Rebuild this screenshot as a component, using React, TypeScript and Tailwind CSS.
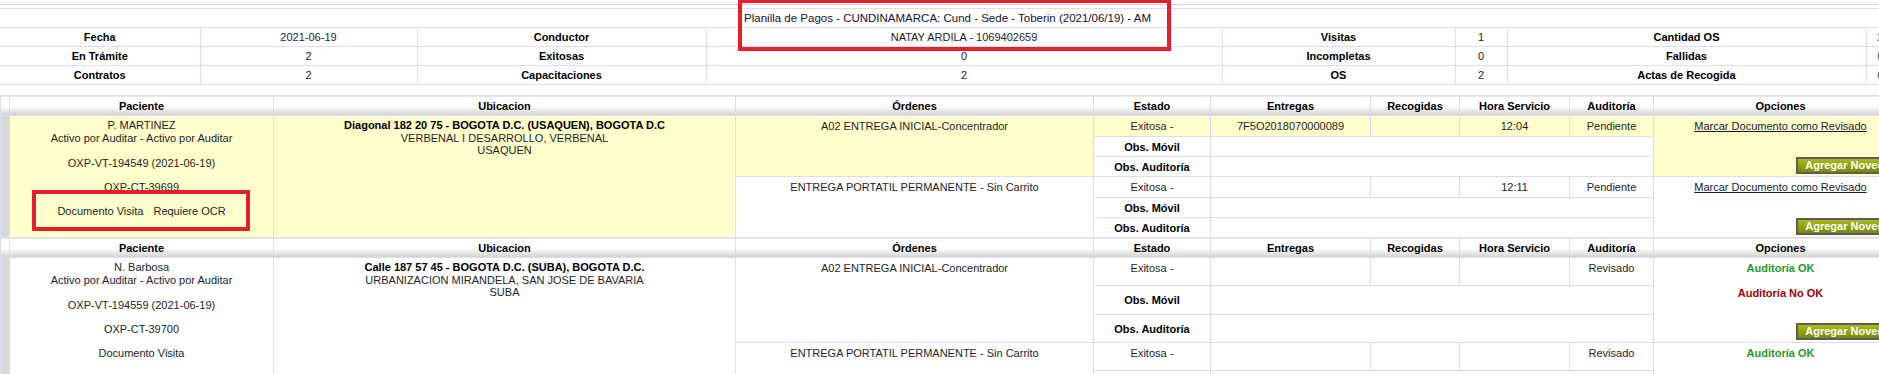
import React from 'react';

const cell = 'border border-[#dcdcf2] px-[3px] py-0 text-center';
const head =
  'border border-[#dcdcf2] p-0 text-center align-middle font-bold text-black bg-[linear-gradient(to_bottom,#ffffff_50%,#d0d0d0_100%)]';

const summaryRows = [
  ['Fecha', '2021-06-19', 'Conductor', 'NATAY ARDILA - 1069402659', 'Visitas', '1', 'Cantidad OS', '2'],
  ['En Trámite', '2', 'Exitosas', '0', 'Incompletas', '0', 'Fallidas', '0'],
  ['Contratos', '2', 'Capacitaciones', '2', 'OS', '2', 'Actas de Recogida', '0'],
];

const SummaryTable = () => (
  <table className="w-[1895px] table-fixed border-collapse">
    <colgroup>
      <col className="w-[200px]" />
      <col className="w-[217px]" />
      <col className="w-[289px]" />
      <col className="w-[516px]" />
      <col className="w-[233px]" />
      <col className="w-[52px]" />
      <col className="w-[359px]" />
      <col className="w-[29px]" />
    </colgroup>
    <tbody>
      <tr className="h-[19px]">
        <td colSpan={8} className="border-y border-[#dcdcf2] p-0 text-center text-[11.5px] text-[#14142a]">
          Planilla de Pagos - CUNDINAMARCA: Cund - Sede - Toberin (2021/06/19) - AM
        </td>
      </tr>
      {summaryRows.map((row, ri) => (
        <tr key={ri} className="h-[19px]">
          {row.map((c, ci) => (
            <td
              key={ci}
              className={`border border-[#dcdcf2] p-0 text-center first:border-l-0 ${
                ci % 2 === 0 ? 'font-bold text-black' : ''
              }`}
            >
              {c}
            </td>
          ))}
        </tr>
      ))}
    </tbody>
  </table>
);

const headers = ['', 'Paciente', 'Ubicacion', 'Órdenes', 'Estado', 'Entregas', 'Recogidas', 'Hora Servicio', 'Auditoría', 'Opciones'];

const HeaderRow = () => (
  <tr className="h-[20px]">
    {headers.map((h, i) => (
      <th key={i} className={head}>
        {h}
      </th>
    ))}
  </tr>
);

const NovedadButton = () => (
  <button className="h-[17px] border-2 border-[#5c5c5c] bg-[linear-gradient(to_bottom,#a8ba1c,#788a04)] px-[7px] text-[11px] font-bold leading-[13px] text-white">
    Agregar Novedad
  </button>
);

type Order = {
  name: string;
  entregas: string;
  hora: string;
  auditoria: string;
  heights: [string, string, string];
};

type Group = {
  highlight: boolean;
  patient: string;
  visit: string;
  contract: string;
  ocr: boolean;
  address: [string, string, string];
  audited: boolean;
  orders: Order[];
};

const groups: Group[] = [
  {
    highlight: true,
    patient: 'P. MARTINEZ',
    visit: 'OXP-VT-194549 (2021-06-19)',
    contract: 'OXP-CT-39699',
    ocr: true,
    address: ['Diagonal 182 20 75 - BOGOTA D.C. (USAQUEN), BOGOTA D.C', 'VERBENAL I DESARROLLO, VERBENAL', 'USAQUEN'],
    audited: false,
    orders: [
      { name: 'A02 ENTREGA INICIAL-Concentrador', entregas: '7F5O2018070000089', hora: '12:04', auditoria: 'Pendiente', heights: ['h-[21px]', 'h-[20px]', 'h-[20px]'] },
      { name: 'ENTREGA PORTATIL PERMANENTE - Sin Carrito', entregas: '', hora: '12:11', auditoria: 'Pendiente', heights: ['h-[21px]', 'h-[20px]', 'h-[20px]'] },
    ],
  },
  {
    highlight: false,
    patient: 'N. Barbosa',
    visit: 'OXP-VT-194559 (2021-06-19)',
    contract: 'OXP-CT-39700',
    ocr: false,
    address: ['Calle 187 57 45 - BOGOTA D.C. (SUBA), BOGOTA D.C.', 'URBANIZACION MIRANDELA, SAN JOSE DE BAVARIA', 'SUBA'],
    audited: true,
    orders: [
      { name: 'A02 ENTREGA INICIAL-Concentrador', entregas: '', hora: '', auditoria: 'Revisado', heights: ['h-[28px]', 'h-[29px]', 'h-[28px]'] },
      { name: 'ENTREGA PORTATIL PERMANENTE - Sin Carrito', entregas: '', hora: '', auditoria: 'Revisado', heights: ['h-[28px]', 'h-[29px]', 'h-[28px]'] },
    ],
  },
];

const Opciones = ({ audited }: { audited: boolean }) =>
  audited ? (
    <div className="flex h-[82px] flex-col items-center pt-[3px]">
      <span className="font-bold text-[#1f9a1f]">Auditoría OK</span>
      <span className="mt-[11px] font-bold text-[#a00000]">Auditoría No OK</span>
      <div className="mt-auto flex w-full justify-end pr-[1px]">
        <NovedadButton />
      </div>
    </div>
  ) : (
    <div className="flex h-[58px] flex-col items-center justify-between pt-[3px]">
      <a href="#" className="text-[#1a1a2a] underline">
        Marcar Documento como Revisado
      </a>
      <div className="flex w-full justify-end pr-[1px]">
        <NovedadButton />
      </div>
    </div>
  );

const GroupRows = ({ g }: { g: Group }) => (
  <>
    {g.orders.map((o, oi) => {
      const bg = g.highlight && oi === 0 ? 'bg-[#ffffcc]' : 'bg-white';
      const groupBg = g.highlight ? 'bg-[#ffffcc]' : 'bg-white';
      return (
        <React.Fragment key={oi}>
          <tr className={o.heights[0]}>
            {oi === 0 && (
              <>
                <td rowSpan={6} className="border border-[#dcdcf2] bg-[#d9d9d9] p-0" />
                <td rowSpan={6} className={`${cell} align-top ${groupBg}`}>
                  <div className="flex flex-col items-center pt-[3px] leading-[13px]">
                    <span>{g.patient}</span>
                    <span>Activo por Auditar - Activo por Auditar</span>
                    <span className="mt-[12px]">{g.visit}</span>
                    <span className="mt-[11px]">{g.contract}</span>
                    <div className="mt-[11px] flex gap-[10px]">
                      <span>Documento Visita</span>
                      {g.ocr && <span>Requiere OCR</span>}
                    </div>
                  </div>
                </td>
                <td rowSpan={6} className={`${cell} align-top ${groupBg}`}>
                  <div className="pt-[3px] leading-[12.5px]">
                    <div className="font-bold text-black">{g.address[0]}</div>
                    <div>{g.address[1]}</div>
                    <div>{g.address[2]}</div>
                  </div>
                </td>
              </>
            )}
            <td rowSpan={3} className={`${cell} align-top pt-[3px] ${bg}`}>
              {o.name}
            </td>
            <td className={`${cell} align-top pt-[3px] ${bg}`}>Exitosa -</td>
            <td className={`${cell} align-top pt-[3px] ${bg}`}>{o.entregas}</td>
            <td className={`${cell} align-top pt-[3px] ${bg}`} />
            <td className={`${cell} align-top pt-[3px] ${bg}`}>{o.hora}</td>
            <td className={`${cell} align-top pt-[3px] ${bg}`}>{o.auditoria}</td>
            <td rowSpan={3} className={`border border-[#dcdcf2] p-0 align-top ${bg}`}>
              <Opciones audited={g.audited} />
            </td>
          </tr>
          <tr className={o.heights[1]}>
            <td className={`${cell} bg-white align-middle font-bold text-black`}>Obs. Móvil</td>
            <td colSpan={4} className={`${cell} bg-white`} />
          </tr>
          <tr className={o.heights[2]}>
            <td className={`${cell} bg-white align-middle font-bold text-black`}>Obs. Auditoría</td>
            <td colSpan={4} className={`${cell} bg-white`} />
          </tr>
        </React.Fragment>
      );
    })}
  </>
);

const GridTable = () => (
  <table className="w-[1907px] table-fixed border-collapse">
    <colgroup>
      <col className="w-[9px]" />
      <col className="w-[264px]" />
      <col className="w-[462px]" />
      <col className="w-[358px]" />
      <col className="w-[117px]" />
      <col className="w-[160px]" />
      <col className="w-[89px]" />
      <col className="w-[110px]" />
      <col className="w-[84px]" />
      <col className="w-[254px]" />
    </colgroup>
    <tbody>
      {groups.map((g, i) => (
        <React.Fragment key={i}>
          <HeaderRow />
          <GroupRows g={g} />
        </React.Fragment>
      ))}
    </tbody>
  </table>
);

export default function App() {
  return (
    <div className="relative h-[374px] w-[1879px] overflow-hidden bg-white font-['Liberation_Sans',Arial,sans-serif] text-[11px] leading-[14px] text-[#1e1e28]">
      <div className="h-[4px]" />
      <div className="h-[4px] border-t border-[#d4d4d4]" />
      <SummaryTable />
      <div className="h-[10px]" />
      <GridTable />
      {/* annotation boxes */}
      <div className="pointer-events-none absolute left-[738px] top-[-1px] h-[52px] w-[433px] border-[4px] border-[#e5202a]" />
      <div className="pointer-events-none absolute left-[32px] top-[190px] h-[41px] w-[218px] border-[4px] border-[#e5202a]" />
    </div>
  );
}
